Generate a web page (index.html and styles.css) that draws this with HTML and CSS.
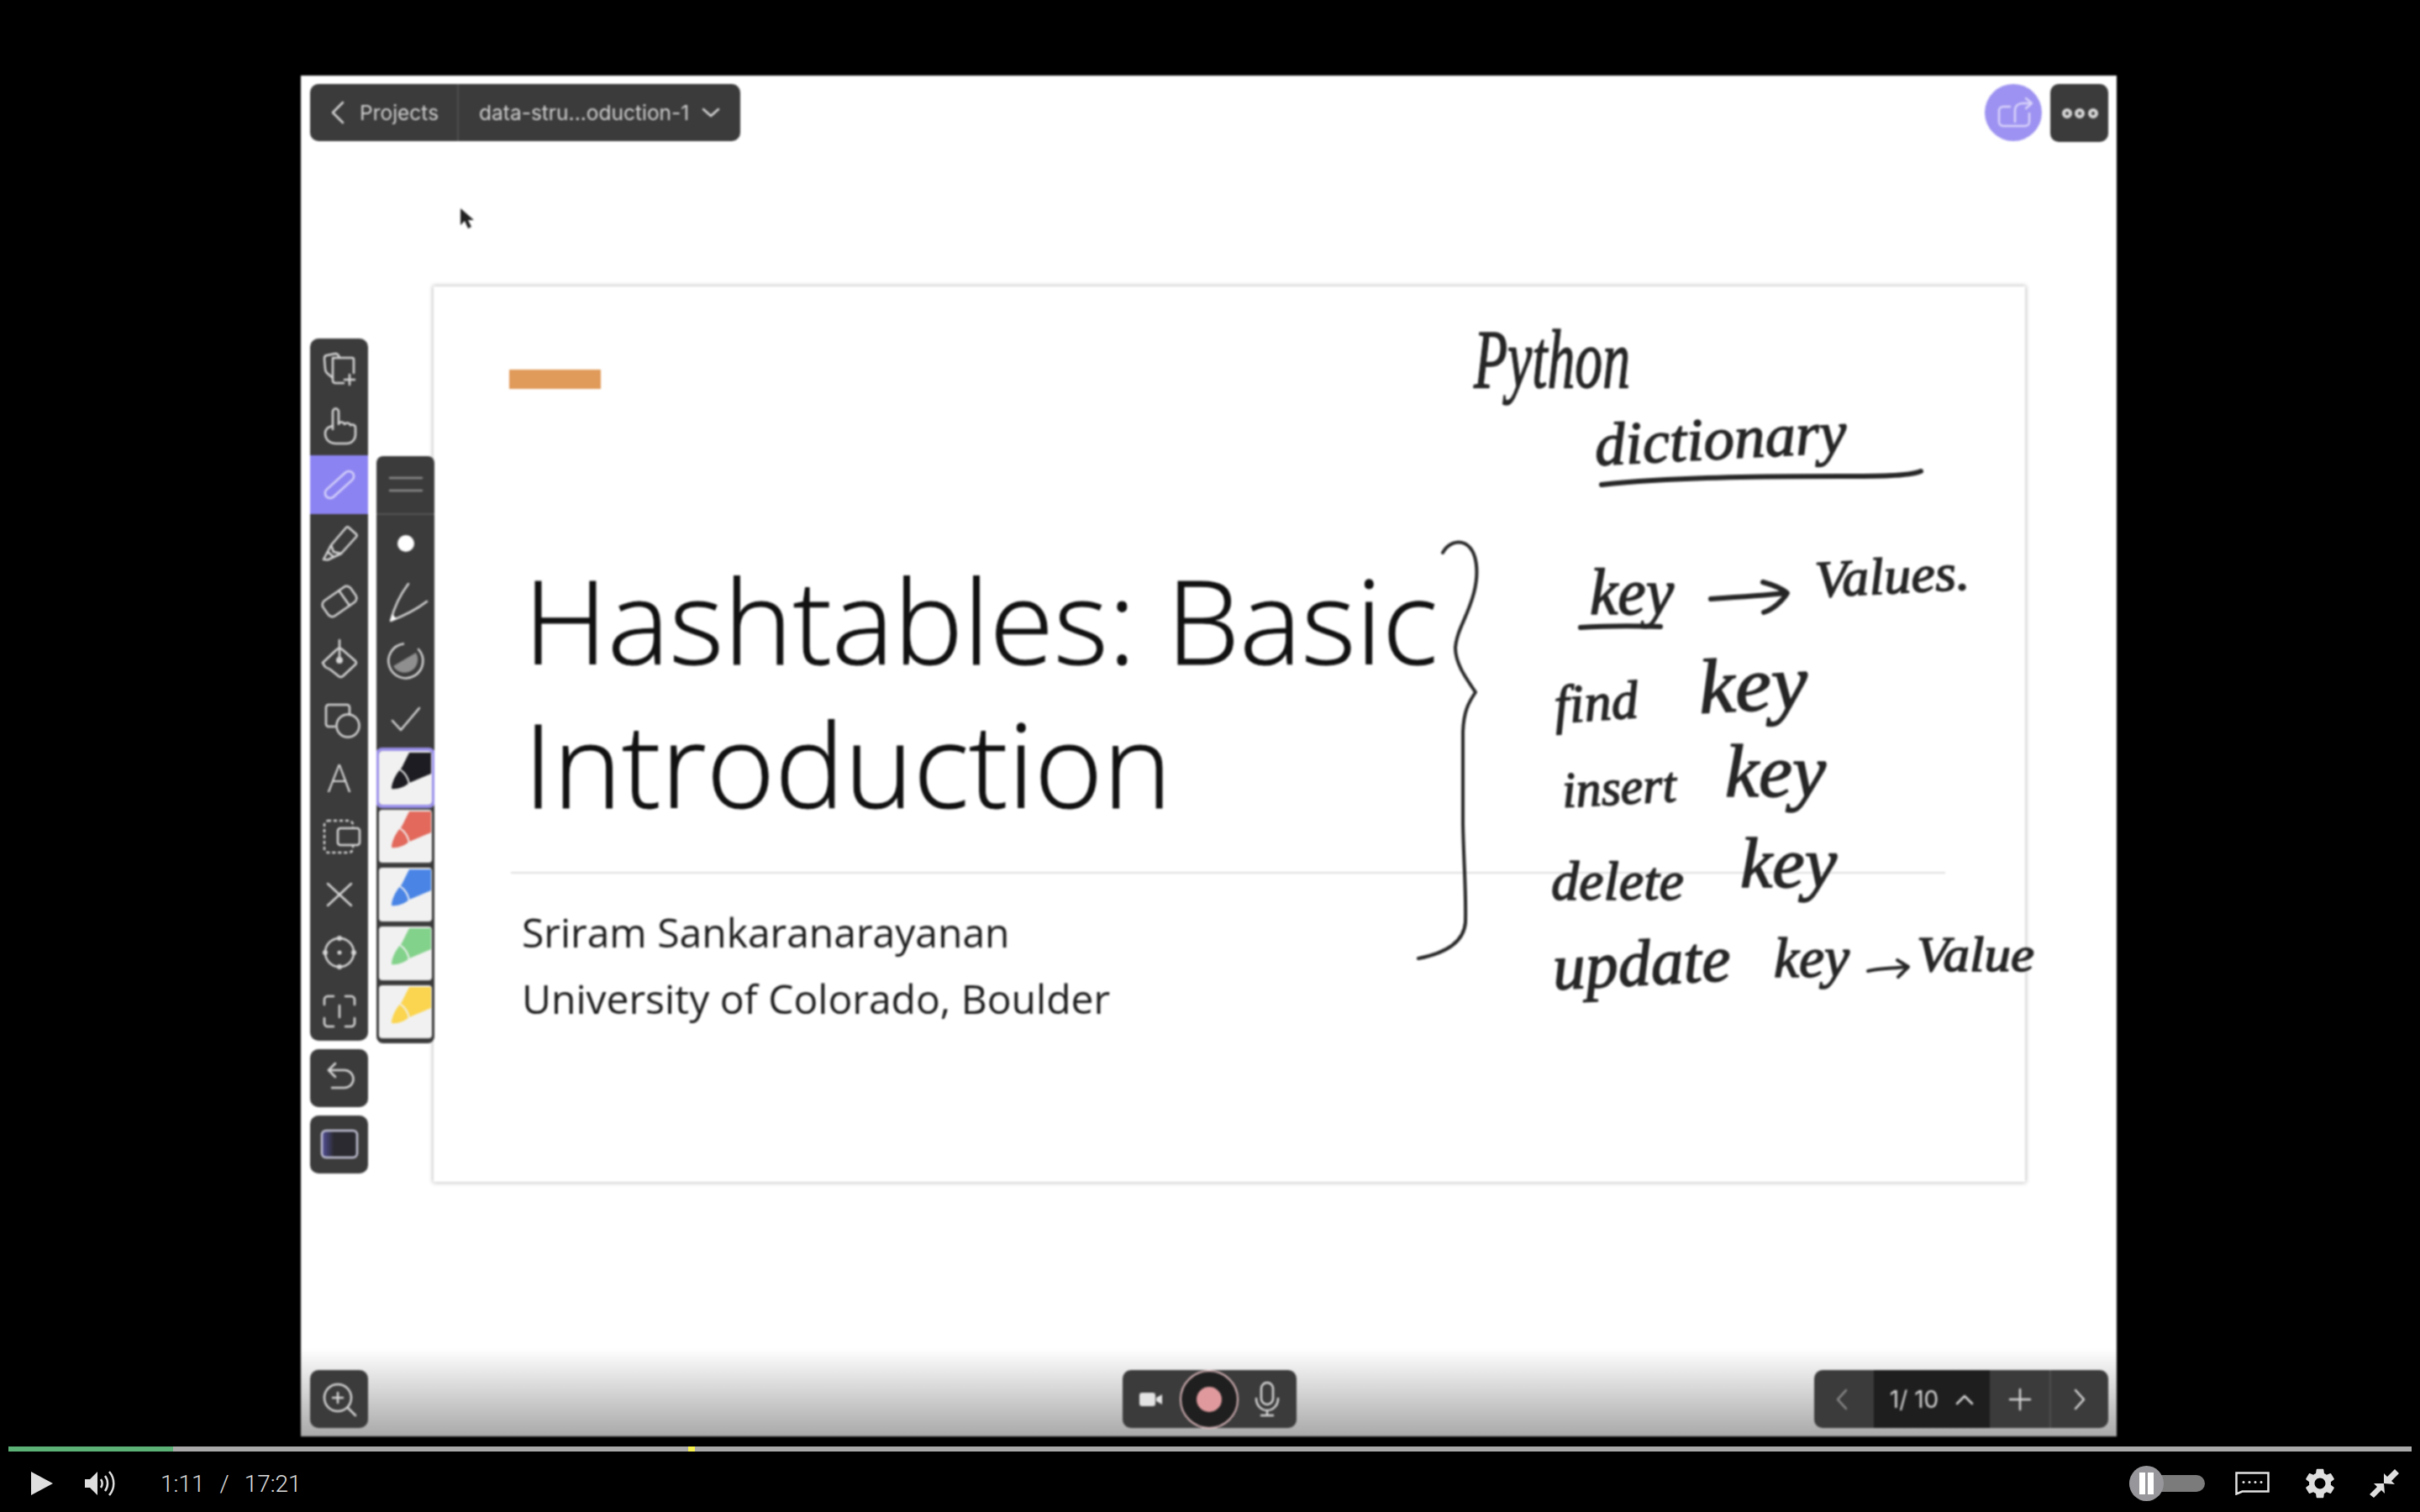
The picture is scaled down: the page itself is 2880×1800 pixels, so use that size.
FILE: index.html
```html
<!DOCTYPE html>
<html>
<head>
  <meta charset="UTF-8">
  <title>Hashtables: Basic Introduction</title>
  <link rel="stylesheet" href="styles.css">
</head>
<body>
  <div class="frame">
    <!-- top bar -->
    <div class="top-row">
      <div class="panel crumbs">
        <div class="crumb-back">
          <svg class="icon" width="18" height="28" viewBox="0 0 18 28"><path d="M15 2 3 14l12 12"/></svg>
          <span>Projects</span>
        </div>
        <div class="crumb-file">
          <span>data-stru...oduction-1</span>
          <svg class="icon" width="22" height="12" viewBox="0 0 22 12"><path d="M2 2l9 8 9-8"/></svg>
        </div>
      </div>
      <div class="top-right">
        <div class="share">
          <svg class="icon" width="68" height="68" viewBox="0 0 68 68"><path d="M30 27h-8a5 5 0 0 0-5 5v13a5 5 0 0 0 5 5h26a5 5 0 0 0 5-5V35"/><path d="M36 45V32c0-6 4-9 9-9h10"/><path d="M49 17l7 6-7 6"/></svg>
        </div>
        <div class="panel btn">
          <svg class="icon more" width="68" height="68" viewBox="0 0 68 68"><circle cx="19" cy="34" r="4"/><circle cx="34" cy="34" r="4"/><circle cx="50" cy="34" r="4"/></svg>
        </div>
      </div>
    </div>

    <svg class="cursor" width="20" height="28" viewBox="0 0 20 28"><path d="M1 1v20l5-5 4 9 4-2-4-8h7z"/></svg>

    <!-- tools and slide -->
    <div class="middle">
      <div class="tools-wrap">
        <div class="panel tools">
          <div class="tool"><svg class="icon" width="48" height="48" viewBox="0 0 48 48"><path d="M16 12h23a2 2 0 0 1 2 2v16M29 42H19a3 3 0 0 1-3-3V12"/><path d="M16 36l-7-6c-1-1-2-3-2-5L6 13c0-2 1-4 3-4l10-2c2 0 4 1 5 5"/><path d="M36 32v12M30 38h12"/></svg></div>
          <div class="tool"><svg class="icon" width="48" height="48" viewBox="0 0 48 48"><path d="M16 28V7a3.5 3.5 0 0 1 7 0v15"/><path d="M23 21c2-2 6-2 7 1M30 22c2-2 6-2 7 1"/><path d="M37 23c3-1 6 0 6 3v8c0 7-5 11-11 11H20c-8 0-13-5-13-12 0-5 3-7 6-8l3-1"/></svg></div>
          <div class="tool tool-on"><svg class="icon" width="48" height="48" viewBox="0 0 48 48"><rect x="3" y="18" width="42" height="12" rx="6" transform="rotate(-42 24 24)"/></svg></div>
          <div class="tool"><svg class="icon" width="48" height="48" viewBox="0 0 48 48"><path d="M35 5l9 8a2 2 0 0 1 0 3L26 36l-9-2-3-8L32 5a2 2 0 0 1 3 0z"/><path d="M14 26 5 43l5 .5L26 36M10 34l7 6"/></svg></div>
          <div class="tool"><svg class="icon" width="48" height="48" viewBox="0 0 48 48"><rect x="4" y="13" width="40" height="22" rx="6" transform="rotate(-35 24 24)"/><path d="M24 12l12 17"/></svg></div>
          <div class="tool"><svg class="icon" width="48" height="48" viewBox="0 0 48 48"><path d="M21 11a4 4 0 0 1 6 0l16 14a3 3 0 0 1 0 4L28 43a4 4 0 0 1-5 0L13 35c-2-1-4-2-6-3l-3-5 17-16z"/><path d="M24 0v22"/><circle class="solid" cx="24" cy="24" r="4"/></svg></div>
          <div class="tool"><svg class="icon" width="48" height="48" viewBox="0 0 48 48"><path d="M18 33h-7a3 3 0 0 1-3-3V10a3 3 0 0 1 3-3h22a3 3 0 0 1 3 3v9"/><circle cx="34" cy="32" r="13.5"/></svg></div>
          <div class="tool tool-text">A</div>
          <div class="tool"><svg class="icon" width="48" height="48" viewBox="0 0 48 48"><rect class="dotted" x="6" y="6" width="34" height="38" rx="5"/><rect class="cover" x="22" y="15" width="26" height="20" rx="3"/></svg></div>
          <div class="tool"><svg class="icon" width="48" height="48" viewBox="0 0 48 48"><path d="M10 11l28 26M38 11 10 37"/></svg></div>
          <div class="tool"><svg class="icon" width="48" height="48" viewBox="0 0 48 48"><circle cx="24" cy="24" r="17"/><circle class="solid" cx="24" cy="24" r="2.5"/><circle class="solid" cx="24" cy="7" r="3"/><circle class="solid" cx="24" cy="41" r="3"/><circle class="solid" cx="7" cy="24" r="3"/><circle class="solid" cx="41" cy="24" r="3"/></svg></div>
          <div class="tool"><svg class="icon" width="48" height="48" viewBox="0 0 48 48"><path d="M6 16v-6a4 4 0 0 1 4-4h7M31 6h7a4 4 0 0 1 4 4v6M42 32v6a4 4 0 0 1-4 4h-7M17 42h-7a4 4 0 0 1-4-4v-6M24 17v14"/></svg></div>
        </div>
        <div class="panel btn undo">
          <svg class="icon" width="48" height="48" viewBox="0 0 48 48"><path d="M11 15h19a10 10 0 0 1 0 21H15"/><path d="M19 7l-8 8 8 8"/></svg>
        </div>
        <div class="panel btn board">
          <svg class="icon" width="48" height="48" viewBox="0 0 48 48"><defs><linearGradient id="boardfill"><stop offset="0" stop-color="#54509a"/><stop offset="0.35" stop-color="#2a2a30"/></linearGradient></defs><rect class="board-rect" x="3" y="8" width="42" height="32" rx="5"/></svg>
        </div>
      </div>

      <div class="panel pens">
        <div class="tool tool-head"><svg class="icon dim" width="48" height="48" viewBox="0 0 48 48"><path d="M5 16h38M5 31h38"/></svg></div>
        <div class="tool"><svg width="48" height="48" viewBox="0 0 48 48"><circle class="white" cx="24" cy="24" r="10"/></svg></div>
        <div class="tool"><svg class="icon" width="54" height="54" viewBox="0 0 54 54"><path d="M30 5C21 17 13 33 9 49 25 43 39 36 52 26"/><path class="white" d="M8 50l3-9 5 6z"/></svg></div>
        <div class="tool"><svg class="icon" width="48" height="48" viewBox="0 0 48 48"><path d="M21 3.500A20.500 20.500 0 1 0 39 10"/><path class="hatch" d="M36 14A15 15 0 0 1 9 30z"/></svg></div>
        <div class="tool"><svg class="icon" width="48" height="48" viewBox="0 0 48 48"><path d="M8 26l10 11 22-26"/></svg></div>
        <div class="pen pen-on"><svg width="62" height="60" viewBox="0 0 62 60"><path class="ink-black" d="M36 2h26v25L36 38c-6 5-14 8-21 7 0-9 7-20 12-25z"/><path class="pen-cut" d="M25 22c6 4 10 10 11 18"/></svg></div>
        <div class="pen"><svg width="62" height="60" viewBox="0 0 62 60"><path class="ink-red" d="M36 2h26v25L36 38c-6 5-14 8-21 7 0-9 7-20 12-25z"/><path class="pen-cut" d="M25 22c6 4 10 10 11 18"/></svg></div>
        <div class="pen"><svg width="62" height="60" viewBox="0 0 62 60"><path class="ink-blue" d="M36 2h26v25L36 38c-6 5-14 8-21 7 0-9 7-20 12-25z"/><path class="pen-cut" d="M25 22c6 4 10 10 11 18"/></svg></div>
        <div class="pen"><svg width="62" height="60" viewBox="0 0 62 60"><path class="ink-green" d="M36 2h26v25L36 38c-6 5-14 8-21 7 0-9 7-20 12-25z"/><path class="pen-cut" d="M25 22c6 4 10 10 11 18"/></svg></div>
        <div class="pen"><svg width="62" height="60" viewBox="0 0 62 60"><path class="ink-yellow" d="M36 2h26v25L36 38c-6 5-14 8-21 7 0-9 7-20 12-25z"/><path class="pen-cut" d="M25 22c6 4 10 10 11 18"/></svg></div>
      </div>

      <div class="slide">
        <div class="accent"></div>
        <h1 class="slide-title">Hashtables: Basic<br>Introduction</h1>
        <div class="slide-rule"></div>
        <p class="slide-sub">Sriram Sankaranarayanan<br>University of Colorado, Boulder</p>

        <!-- pen annotations, viewBox is in screen coordinates -->
        <svg class="ink" width="1894" height="1068" viewBox="515 340 1894 1068">
          <path d="M1716 657C1722 646 1733 642 1742 646 1758 654 1759 682 1753 705 1745 735 1733 748 1731 770 1731 790 1745 808 1755 823 1747 835 1741 845 1740 870L1740 980C1741 1030 1744 1060 1743 1097 1741 1122 1718 1134 1687 1140"/>
          <path class="ink-thick" d="M1905 576C2000 566 2120 566 2190 566 2230 566 2270 566 2285 560"/>
          <path class="ink-thick" d="M1880 746C1910 744 1945 744 1975 745"/>
          <path class="ink-thick" d="M2035 712C2065 710 2095 708 2125 705M2097 692C2108 695 2120 700 2126 705 2120 715 2108 725 2098 728"/>
          <path d="M2222 1155C2235 1152 2250 1152 2268 1150M2257 1142 2270 1150 2258 1162"/>
          <text class="ink-text" x="1753" y="460" textLength="186" lengthAdjust="spacingAndGlyphs" font-size="100">Python</text>
          <text class="ink-text" x="1898" y="553" textLength="300" lengthAdjust="spacingAndGlyphs" font-size="72" transform="rotate(-3 1898 553)">dictionary</text>
          <text class="ink-text" x="1891" y="730" textLength="100" lengthAdjust="spacingAndGlyphs" font-size="78">key</text>
          <text class="ink-text" x="2160" y="710" textLength="184" lengthAdjust="spacingAndGlyphs" font-size="62" transform="rotate(-3 2160 710)">Values.</text>
          <text class="ink-text" x="1850" y="860" textLength="100" lengthAdjust="spacingAndGlyphs" font-size="64" transform="rotate(-4 1850 860)">find</text>
          <text class="ink-text" x="2022" y="848" textLength="130" lengthAdjust="spacingAndGlyphs" font-size="92" transform="rotate(-3 2022 848)">key</text>
          <text class="ink-text" x="1859" y="960" textLength="136" lengthAdjust="spacingAndGlyphs" font-size="60" transform="rotate(-3 1859 960)">insert</text>
          <text class="ink-text" x="2052" y="947" textLength="120" lengthAdjust="spacingAndGlyphs" font-size="88">key</text>
          <text class="ink-text" x="1845" y="1070" textLength="158" lengthAdjust="spacingAndGlyphs" font-size="66">delete</text>
          <text class="ink-text" x="2070" y="1055" textLength="115" lengthAdjust="spacingAndGlyphs" font-size="84">key</text>
          <text class="ink-text" x="1848" y="1177" textLength="212" lengthAdjust="spacingAndGlyphs" font-size="78" transform="rotate(-3 1848 1177)">update</text>
          <text class="ink-text" x="2110" y="1162" textLength="90" lengthAdjust="spacingAndGlyphs" font-size="68">key</text>
          <text class="ink-text" x="2280" y="1155" textLength="140" lengthAdjust="spacingAndGlyphs" font-size="60">Value</text>
        </svg>
      </div>
    </div>

    <!-- bottom row of the recording app -->
    <div class="bottom-row">
      <div class="panel btn">
        <svg class="icon" width="68" height="68" viewBox="0 0 68 68"><circle cx="32" cy="32" r="16"/><path d="M44 44l9 9M32 26v12M26 32h12"/></svg>
      </div>
      <div class="panel rec">
        <div class="rec-cell"><svg width="28" height="18" viewBox="0 0 28 18"><rect class="white-soft" x="0" y="1" width="19" height="16" rx="3"/><path class="white-soft" d="M20 7l7-4v12l-7-4z"/></svg></div>
        <div class="rec-cell"><div class="rec-ring"><div class="rec-dot"></div></div></div>
        <div class="rec-cell"><svg class="icon" width="30" height="42" viewBox="0 0 30 42"><rect x="8" y="1" width="14" height="26" rx="7"/><path d="M2 20c0 8 6 14 13 14s13-6 13-14M15 34v6M8 40h14"/></svg></div>
      </div>
      <div class="panel pager">
        <div class="pager-cell pager-prev"><svg class="icon dim" width="16" height="26" viewBox="0 0 16 26"><path d="M13 2 3 13l10 11"/></svg></div>
        <div class="pager-cell pager-count"><span>1/ 10</span><svg class="icon" width="22" height="14" viewBox="0 0 22 14"><path d="M2 12l9-9 9 9"/></svg></div>
        <div class="pager-cell pager-add"><svg class="icon" width="26" height="26" viewBox="0 0 26 26"><path d="M13 1v24M1 13h24"/></svg></div>
        <div class="pager-cell pager-next"><svg class="icon" width="16" height="26" viewBox="0 0 16 26"><path d="M3 2l10 11L3 24"/></svg></div>
      </div>
    </div>
  </div>

  <!-- video player -->
  <div class="progress">
    <div class="progress-done"></div>
    <div class="progress-mark"></div>
  </div>
  <div class="controls">
    <svg class="ctl-play" width="26" height="28" viewBox="0 0 26 28"><path d="M0 0l26 14L0 28z"/></svg>
    <svg class="ctl-vol" width="38" height="32" viewBox="0 0 38 32"><path class="fill-light" d="M0 11h6l9-9v28l-9-9H0z"/><path class="vol-arc" d="M19 11c2 3 2 7 0 10M24 7c4 5 4 13 0 18M29 2c7 8 7 20 0 28"/></svg>
    <div class="time"><span>1:11</span><span>/</span><span>17:21</span></div>
    <div class="ctl-right">
      <div class="toggle"><div class="knob"><i></i><i></i></div></div>
      <svg class="ctl-cc" width="41" height="28" viewBox="0 0 41 28"><path d="M1.500 1.500h38v22h-31l-7 3z"/><circle cx="10" cy="12.500" r="1.500"/><circle cx="17" cy="12.500" r="1.500"/><circle cx="24" cy="12.500" r="1.500"/><circle cx="31" cy="12.500" r="1.500"/></svg>
      <svg class="ctl-gear" width="36" height="36" viewBox="2 2 20 20"><path d="M19.140 12.940c.04-.3.06-.61.06-.94 0-.32-.02-.64-.07-.94l2.030-1.580a.49.49 0 0 0 .12-.61l-1.920-3.320a.488.488 0 0 0-.59-.22l-2.390.96c-.5-.38-1.030-.7-1.620-.94l-.36-2.540a.484.484 0 0 0-.48-.41h-3.840c-.24 0-.43.17-.47.41l-.36 2.540c-.59.24-1.130.57-1.620.94l-2.390-.96c-.22-.08-.47 0-.59.22L2.740 8.870c-.12.21-.08.47.12.61l2.030 1.580c-.05.3-.09.63-.09.94s.02.64.07.94l-2.030 1.580a.49.49 0 0 0-.12.61l1.920 3.320c.12.22.37.29.59.22l2.390-.96c.5.38 1.030.7 1.620.94l.36 2.540c.05.24.24.41.48.41h3.840c.24 0 .44-.17.47-.41l.36-2.540c.59-.24 1.130-.56 1.620-.94l2.390.96c.22.08.47 0 .59-.22l1.920-3.320c.12-.22.07-.47-.12-.61l-2.010-1.580zM12 15.600c-1.980 0-3.600-1.620-3.600-3.600s1.620-3.600 3.600-3.600 3.600 1.620 3.600 3.600-1.620 3.600-3.600 3.600z"/></svg>
      <svg class="ctl-full" width="35" height="34" viewBox="0 0 35 34"><path d="M17 17V5l4 4 9-9 5 5-9 9 4 4z"/><path d="M17 17H5l4 4-9 9 5 4 9-9 4 4z"/></svg>
    </div>
  </div>
</body>
</html>
```
FILE: styles.css
```css
html, body {
  margin: 0;
  height: 100%;
}
body {
  width: 2880px;
  height: 1800px;
  overflow: hidden;
  background: #000;
  font-family: "Inter", "Liberation Sans", sans-serif;
  padding-top: 90px;
  box-sizing: border-box;
}

/* the recording is a soft video, so the whole frame gets a slight blur */
.frame {
  position: relative;
  width: 2161px;
  height: 1620px;
  margin-left: 358px;
  padding: 10px 10px 10px 11px;
  box-sizing: border-box;
  display: flex;
  flex-direction: column;
  background: linear-gradient(to bottom, #fff calc(100% - 105px), #a9a9a9 100%);
  filter: blur(0.8px);
}

.panel {
  background: #3b3b3b;
  border-radius: 10px;
  color: #cfcfcf;
}
.btn {
  width: 69px;
  height: 69px;
  display: flex;
  align-items: center;
  justify-content: center;
}

.icon {
  fill: none;
  stroke: #d6d6d6;
  stroke-width: 2.5;
  stroke-linecap: round;
  stroke-linejoin: round;
  overflow: visible;
}
.icon.dim { stroke: #8a8a8a; }
.icon.more { stroke-width: 4; }
.icon .solid { fill: #d6d6d6; stroke: none; }
.icon .dotted { stroke-dasharray: 2 5; }
.icon .cover { fill: #3b3b3b; }
.icon .hatch { fill: #8f8f8f; stroke: none; }
.white { fill: #fff; stroke: none; }
.white-soft { fill: #e4e4e4; }

/* top */
.top-row {
  display: flex;
  justify-content: space-between;
  height: 68px;
}
.crumbs {
  display: flex;
  width: 512px;
  font-size: 24.500px;
}
.crumb-back {
  width: 177px;
  display: flex;
  align-items: center;
  gap: 17px;
  padding-left: 24px;
  box-sizing: border-box;
  border-right: 2px solid #4e4e4e;
}
.crumb-file {
  flex: 1;
  display: flex;
  align-items: center;
  gap: 15px;
  padding-left: 24px;
}
.top-right {
  display: flex;
  gap: 10px;
}
.share {
  width: 68px;
  height: 68px;
  border-radius: 50%;
  background: #9d92f1;
}
.share .icon { stroke: #d9d4fb; }

.cursor {
  position: absolute;
  left: 189px;
  top: 157px;
  fill: #222;
}

/* middle */
.middle {
  flex: 1;
  display: flex;
  align-items: flex-start;
}
.tools-wrap {
  width: 69px;
  margin-top: 235px;
  display: flex;
  flex-direction: column;
  gap: 10px;
}
.tools {
  display: flex;
  flex-direction: column;
}
.tool {
  height: 69.670px;
  flex-shrink: 0;
  display: flex;
  align-items: center;
  justify-content: center;
}
.tool-on {
  background: #8c83f2;
}
.tool-on .icon { stroke: #d5d2fa; }
.tool-text {
  font-family: "Open Sans", sans-serif;
  font-weight: 300;
  font-size: 46px;
  color: #dcdcdc;
}
.board-rect { fill: url(#boardfill); stroke: #c4c4d8; }

.pens {
  position: relative;
  z-index: 2;
  width: 69px;
  margin: 375px 0 0 10px;
  padding-bottom: 3px;
  border-radius: 8px;
  overflow: hidden;
  display: flex;
  flex-direction: column;
}
.tool-head {
  border-bottom: 2px solid #555;
  box-sizing: border-box;
}
.pen {
  height: 63.600px;
  margin: 3px;
  flex-shrink: 0;
  background: #f1f1f1;
  border-radius: 4px;
  overflow: hidden;
}
.pen svg { display: block; }
.pen-on {
  outline: 4px solid #9a90ea;
}
.pen-cut {
  fill: none;
  stroke: #f1f1f1;
  stroke-width: 2;
}
.ink-black { fill: #1c1c22; }
.ink-red { fill: #e2695c; }
.ink-blue { fill: #4a85e6; }
.ink-green { fill: #83d28b; }
.ink-yellow { fill: #fbd54f; }

/* slide */
.slide {
  position: relative;
  width: 1894px;
  height: 1066px;
  margin: 173px 0 0 -1px;
  background: #fff;
  box-shadow: 0 0 5px 1px #bdbdbd;
  color: #111;
  font-family: "Open Sans", sans-serif;
}
.accent {
  width: 109px;
  height: 23px;
  margin: 99px 0 0 90px;
  background: #e09a59;
}
.slide-title {
  margin: 189px 0 0 107px;
  font-size: 139px;
  font-weight: 300;
  line-height: 171px;
  -webkit-text-stroke: 1px #111;
}
.slide-rule {
  height: 2px;
  margin: 44px 0 0 92px;
  width: 1707px;
  background: #dedede;
}
.slide-sub {
  margin: 30px 0 0 105px;
  font-size: 48px;
  line-height: 79px;
  color: #1c1c1c;
}
.ink {
  position: absolute;
  left: 0;
  top: 0;
  overflow: visible;
  fill: none;
  stroke: #262626;
  stroke-width: 4;
  stroke-linecap: round;
  stroke-linejoin: round;
}
.ink .ink-thick { stroke-width: 6; }
.ink-text {
  font-family: "Liberation Serif", serif;
  font-style: italic;
  fill: #262626;
  stroke: #262626;
  stroke-width: 1.5;
}

/* bottom of the frame */
.bottom-row {
  display: grid;
  grid-template-columns: 1fr auto 1fr;
  align-items: center;
  height: 69px;
}
.bottom-row > .btn { justify-self: start; }
.rec {
  display: flex;
  width: 207px;
  height: 69px;
}
.rec-cell {
  width: 69px;
  display: flex;
  align-items: center;
  justify-content: center;
}
.rec-ring {
  width: 70px;
  height: 70px;
  border: 2px solid #d9b6ba;
  box-sizing: border-box;
  border-radius: 50%;
  background: #1f1f1f;
  display: flex;
  align-items: center;
  justify-content: center;
  flex-shrink: 0;
}
.rec-dot {
  width: 30px;
  height: 30px;
  border-radius: 50%;
  background: #e09a9e;
}
.pager {
  justify-self: end;
  display: flex;
  width: 350px;
  height: 69px;
  overflow: hidden;
}
.pager-cell {
  display: flex;
  align-items: center;
  justify-content: center;
  box-sizing: border-box;
}
.pager-prev {
  width: 71px;
  padding-right: 6px;
}
.pager-count {
  width: 138px;
  gap: 20px;
  background: #1e1e1e;
  font-size: 28px;
  color: #d4d4d4;
}
.pager-add {
  width: 73px;
  border-right: 2px solid #4e4e4e;
}
.pager-next { width: 68px; }

/* player */
.progress {
  position: relative;
  height: 6px;
  margin: 12px 10px 0;
  background: #a9a9a9;
}
.progress-done {
  width: 196px;
  height: 100%;
  background: #5cb176;
}
.progress-mark {
  position: absolute;
  left: 809px;
  top: 0;
  width: 8px;
  height: 100%;
  background: #f6f04e;
}
.controls {
  display: flex;
  align-items: center;
  height: 68px;
  margin-top: 4px;
  padding: 0 25px 0 37px;
}
.ctl-play { fill: #dedede; }
.ctl-vol { margin-left: 38px; }
.fill-light { fill: #dedede; }
.vol-arc {
  fill: none;
  stroke: #dedede;
  stroke-width: 2.5;
}
.time {
  margin-left: 52px;
  display: flex;
  gap: 18px;
  font-family: "Roboto", sans-serif;
  font-weight: 300;
  font-size: 28px;
  color: #dedede;
}
.ctl-right {
  margin-left: auto;
  display: flex;
  align-items: center;
}
.toggle {
  width: 90px;
  height: 20px;
  border-radius: 10px;
  background: #7b7b7b;
  display: flex;
  align-items: center;
}
.knob {
  width: 41px;
  height: 42px;
  border-radius: 50%;
  background: #97979b;
  display: flex;
  align-items: center;
  justify-content: center;
  gap: 3px;
  flex-shrink: 0;
}
.knob i {
  width: 7px;
  height: 26px;
  background: #fff;
}
.ctl-cc {
  margin-left: 36px;
  fill: none;
  stroke: #e2e2e2;
  stroke-width: 2.5;
}
.ctl-cc circle { fill: #e2e2e2; stroke: none; }
.ctl-gear {
  margin-left: 42px;
  fill: #dedede;
}
.ctl-full {
  margin-left: 41px;
  fill: #dedede;
}
```
